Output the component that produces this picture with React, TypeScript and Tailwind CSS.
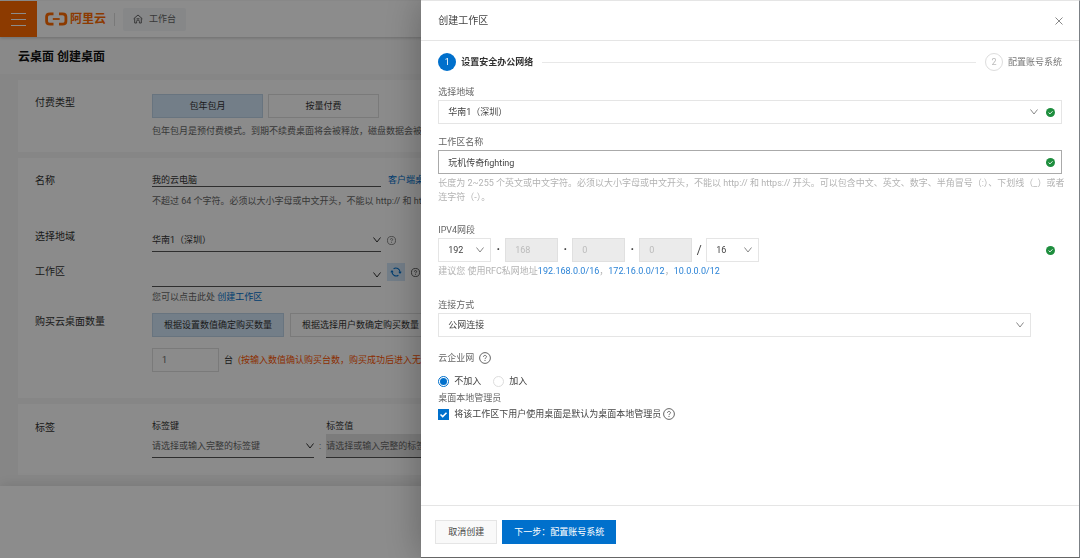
import { useState } from "react";
import type { ReactNode } from "react";

function Chevron({ className }: { className?: string }) {
  return (
    <svg viewBox="0 0 8 6" className={`pointer-events-none h-[6px] w-[8px] ${className ?? ""}`} fill="none" stroke="currentColor">
      <path d="M0.5 0.5 4 5 7.5 0.5" />
    </svg>
  );
}

function CheckBadge() {
  return (
    <svg viewBox="0 0 9 9" className="size-[9px] shrink-0">
      <circle cx="4.5" cy="4.5" r="4.5" fill="#1e8e3e" />
      <path d="M2.6 4.6 4 5.9 6.5 3.3" fill="none" stroke="#fff" strokeWidth="0.9" />
    </svg>
  );
}

function Help({ className }: { className: string }) {
  return (
    <svg viewBox="0 0 12 12" className={`shrink-0 ${className}`} fill="none" stroke="currentColor">
      <circle cx="6" cy="6" r="5.4" />
      <path d="M4.5 4.9C4.5 3.9 5.1 3.4 6 3.4S7.5 4 7.5 4.8C7.5 5.8 6 5.9 6 7.1M6 8v1" />
    </svg>
  );
}

function Row({ label, children, className }: { label: string; children: ReactNode; className?: string }) {
  return (
    <div className={`flex ${className ?? ""}`}>
      <div className="w-[117px] shrink-0 pt-[2px] text-[10px] text-[#333]">{label}</div>
      <div className="min-w-0 flex-1">{children}</div>
    </div>
  );
}

function Toggle({ children, active, className }: { children: ReactNode; active?: boolean; className?: string }) {
  const color = active ? "border-[#bdd4e8] bg-[#d1e5f7]" : "border-[#dedede]";
  return (
    <button type="button" className={`h-[24px] shrink-0 border text-center text-[#333] ${color} ${className ?? ""}`}>
      {children}
    </button>
  );
}

function UnderlineSelect({ label, value, className }: { label: string; value: string; className: string }) {
  return (
    <div className={`relative h-[24px] shrink-0 border-b border-[#555] ${className}`}>
      <select aria-label={label} className="h-full w-full appearance-none bg-transparent">
        <option>{value}</option>
      </select>
      <Chevron className="absolute right-0 bottom-[8px] text-[#333]" />
    </div>
  );
}

function BoxSelect({ id, label, value, className, valid }: { id?: string; label?: string; value: string; className?: string; valid?: boolean }) {
  return (
    <div className={`relative h-[24px] border border-[#e5e5e5] ${className ?? ""}`}>
      <select id={id} aria-label={label} className="h-full w-full appearance-none bg-transparent pl-[9px]">
        <option>{value}</option>
      </select>
      <div className="pointer-events-none absolute inset-y-0 right-[6px] flex items-center gap-[8px] text-[#888]">
        <Chevron />
        {valid && <CheckBadge />}
      </div>
    </div>
  );
}

function OrderPage() {
  return (
    <div className="flex min-h-screen flex-col border-t border-[#fff] bg-[#f5f5f5] whitespace-nowrap text-[#666]">
      <header className="relative flex h-[36px] items-center bg-white shadow-[0_1px_3px_rgba(0,0,0,0.2)]">
        <button type="button" aria-label="菜单" className="flex h-full w-[37px] flex-col items-center justify-center gap-[5px] bg-[#ff6a00]">
          <span className="h-px w-[15px] bg-white" />
          <span className="h-px w-[15px] bg-white" />
          <span className="h-px w-[15px] bg-white" />
        </button>
        <div className="ml-[8px] flex items-center gap-[2px] text-[#ff6a00]">
          <svg viewBox="0 0 23 14" className="h-[14px] w-[23px]" fill="none" stroke="currentColor">
            <path d="M8.5 1.8H5C2.6 1.8 1.6 2.8 1.6 4.8V9.2C1.6 11.2 2.6 12.2 5 12.2H8.5M14 1.8H17.500C19.900 1.800 20.900 2.800 20.900 4.800V9.200C20.900 11.200 19.900 12.200 17.500 12.200H14" strokeWidth="2.8" />
            <path d="M7.800 7H14.700" strokeWidth="1.800" />
          </svg>
          <span className="text-[12px] font-bold">阿里云</span>
        </div>
        <div className="ml-[8px] h-[13px] w-px bg-[#ddd]" />
        <a href="#" className="ml-[8px] flex h-[23px] items-center gap-[6px] rounded-[2px] bg-[#f4f6f8] px-[10px]">
          <svg viewBox="0 0 10 10" className="size-[10px]" fill="none" stroke="currentColor">
            <path d="M0.600 4.800 5 1 9.400 4.800M1.700 4.200V9H3.600V7.400A1.400 1.400 0 0 1 6.400 7.400V9H8.300V4.200M3.500 4.800H6.500" />
          </svg>
          工作台
        </a>
      </header>
      <h1 className="bg-[#f9f9f9] pt-[13px] pb-[9px] pl-[18px] text-[12px] leading-[15px] font-bold text-[#111]">云桌面 创建桌面</h1>

      <main className="flex flex-col gap-[6px] pt-[6px] pb-[11px] pl-[18px]">
        <section className="bg-[#fdfdfd] pt-[14px] pb-[14px] pl-[17px]">
          <Row label="付费类型">
            <div className="flex gap-[5px]">
              <Toggle active className="w-[111px]">包年包月</Toggle>
              <Toggle className="w-[111px]">按量付费</Toggle>
            </div>
            <p className="mt-[6px]">包年包月是预付费模式。到期不续费桌面将会被释放，磁盘数据会被清空</p>
          </Row>
        </section>

        <section className="bg-[#fdfdfd] pt-[14px] pb-[26px] pl-[17px]">
          <Row label="名称">
            <div className="flex items-center gap-[7px]">
              <input aria-label="名称" defaultValue="我的云电脑" className="h-[15px] w-[229px] border-b border-[#555] text-[#333]" />
              <a href="#" className="text-[#0070cc]">客户端桌</a>
            </div>
            <p className="mt-[7px]">不超过 64 个字符。必须以大小字母或中文开头，不能以 http:// 和 https:</p>
          </Row>
          <Row label="选择地域" className="mt-[20px]">
            <div className="flex items-center gap-[6px] text-[#333]">
              <UnderlineSelect label="选择地域" value="华南1（深圳）" className="w-[229px]" />
              <Help className="size-[9px] text-[#666]" />
            </div>
          </Row>
          <Row label="工作区" className="mt-[11px]">
            <div className="flex items-start gap-[6px] text-[#333]">
              <UnderlineSelect label="工作区" value="" className="w-[229px]" />
              <button type="button" aria-label="刷新" className="flex size-[18px] items-center justify-center bg-[#d1e5f7] text-[#0070cc]">
                <svg viewBox="0 0 12 12" className="size-[12px]" fill="none" stroke="currentColor" strokeWidth="1.100">
                  <path d="M3.600 2.800A4 4 0 0 1 10 6M8.400 9.200A4 4 0 0 1 2 6" />
                  <path d="M8.300 5.800H11.700L10 8ZM0.300 6.200H3.700L2 4Z" fill="currentColor" stroke="none" />
                </svg>
              </button>
              <Help className="mt-[5px] size-[9px]" />
            </div>
            <p className="mt-[3px]">
              您可以点击此处 <a href="#" className="text-[#0070cc]">创建工作区</a>
            </p>
          </Row>
          <Row label="购买云桌面数量" className="mt-[9px]">
            <div className="flex gap-[6px]">
              <Toggle active className="px-[11px]">根据设置数值确定购买数量</Toggle>
              <Toggle className="px-[11px]">根据选择用户数确定购买数量</Toggle>
            </div>
            <div className="mt-[11px] flex items-center gap-[5px]">
              <input aria-label="购买数量" defaultValue="1" className="h-[24px] w-[67px] border border-[#dedede] px-[9px]" />
              <span className="text-[#333]">台</span>
              <span className="text-[#ff5500]">(按输入数值确认购买台数，购买成功后进入无影</span>
            </div>
          </Row>
        </section>

        <section className="bg-[#fdfdfd] pt-[15px] pb-[17px] pl-[17px]">
          <Row label="标签">
            <div className="flex items-end gap-[5px]">
              <div>
                <div className="mb-px text-[#333]">标签键</div>
                <UnderlineSelect label="标签键" value="请选择或输入完整的标签键" className="w-[162px]" />
              </div>
              <span className="pb-[5px]">:</span>
              <div>
                <div className="mb-px text-[#333]">标签值</div>
                <UnderlineSelect label="标签值" value="请选择或输入完整的标签值" className="w-[162px] bg-[#e2e2e2]" />
              </div>
            </div>
          </Row>
        </section>
      </main>
      <footer className="relative min-h-[71px] flex-1 bg-white shadow-[0_-2px_12px_rgba(0,0,0,0.1)]" />
    </div>
  );
}

export default function App() {
  const [name, setName] = useState("玩机传奇fighting");
  const [join, setJoin] = useState(false);
  const [admin, setAdmin] = useState(true);

  const radio =
    "size-[11px] appearance-none rounded-full border border-[#ddd] bg-clip-content p-px checked:border-[#0070cc] checked:bg-[#0070cc]";
  const octet = "h-[24px] w-[53px] border border-[#e0e0e0] bg-[#ebebeb] pl-[9px] text-[#bbb]";

  return (
    <div className="overflow-hidden font-['Roboto','Noto_Sans_CJK_SC',sans-serif] text-[9px] leading-[14px]">
      <OrderPage />
      <div className="fixed inset-0 bg-black/45" />

      <div
        role="dialog"
        aria-label="创建工作区"
        className="fixed inset-y-0 right-0 flex w-[61%] flex-col border-t border-r border-b border-t-[#e5e5e5] border-r-[#7b8085] border-b-[#666] bg-white text-[#444] shadow-[0_0_36px_rgba(0,0,0,0.3)]"
      >
        <header className="flex h-[40px] items-center justify-between border-b border-[#e5e5e5] px-[17px]">
          <h2 className="text-[10px]">创建工作区</h2>
          <button type="button" aria-label="关闭" className="-mr-px text-[#888]">
            <svg viewBox="0 0 8 8" className="size-[8px]" fill="none" stroke="currentColor">
              <path d="M0.500 0.500 7.500 7.500M7.500 0.500 0.500 7.500" />
            </svg>
          </button>
        </header>

        <form className="flex-1 overflow-auto px-[17px] pt-[12px]">
          <ol className="flex items-center gap-[9px]">
            <li className="flex items-center gap-[5px] font-bold text-[#333]">
              <span className="flex size-[18px] items-center justify-center rounded-full bg-[#0070cc] font-normal text-white">1</span>
              设置安全办公网络
            </li>
            <li aria-hidden="true" className="h-px flex-1 bg-[#e8e8e8]" />
            <li className="flex items-center gap-[5px] text-[#777]">
              <span className="flex size-[18px] items-center justify-center rounded-full border border-[#ddd] text-[#bbb]">2</span>
              配置账号系统
            </li>
          </ol>

          <label htmlFor="region" className="mt-[14px] mb-px block text-[#666]">选择地域</label>
          <BoxSelect id="region" value="华南1（深圳）" valid />

          <label htmlFor="name" className="mt-[11px] mb-px block text-[#666]">工作区名称</label>
          <div className="flex h-[24px] items-center border border-[#aaa] pr-[6px]">
            <input id="name" value={name} onChange={(e) => setName(e.target.value)} className="h-full flex-1 pl-[9px] outline-none" />
            <CheckBadge />
          </div>
          <p className="-mr-[6px] mt-[2px] text-[#b3b3b3]">
            长度为 2~255 个英文或中文字符。必须以大小字母或中文开头，不能以 http:// 和 https:// 开头。可以包含中文、英文、数字、半角冒号（:）、下划线（_）或者连字符（-）。
          </p>

          <div className="mt-[19px] mb-px text-[#666]">IPV4网段</div>
          <div className="flex items-center justify-between pr-[7px]">
            <div className="flex items-center">
              <BoxSelect label="网段第一段" value="192" className="w-[53px]" />
              <span className="w-[14px] text-center text-[12px] font-bold">·</span>
              <input aria-label="网段第二段" disabled value="168" className={octet} />
              <span className="w-[14px] text-center text-[12px] font-bold">·</span>
              <input aria-label="网段第三段" disabled value="0" className={octet} />
              <span className="w-[14px] text-center text-[12px] font-bold">·</span>
              <input aria-label="网段第四段" disabled value="0" className={octet} />
              <span className="w-[14px] text-center text-[12px]">/</span>
              <BoxSelect label="掩码" value="16" className="w-[53px]" />
            </div>
            <CheckBadge />
          </div>
          <p className="mt-[2px] text-[#b3b3b3]">
            建议您 使用RFC私网地址<a href="#" className="text-[#2b83d6]">192.168.0.0/16</a>，
            <a href="#" className="text-[#2b83d6]">172.16.0.0/12</a>，
            <a href="#" className="text-[#2b83d6]">10.0.0.0/12</a>
          </p>

          <label htmlFor="conn" className="mt-[20px] mb-px block text-[#666]">连接方式</label>
          <BoxSelect id="conn" value="公网连接" className="w-[95%]" />

          <div className="mt-[14px] flex h-[14px] items-center gap-[5px] text-[#666]">
            云企业网
            <Help className="size-[12px]" />
          </div>
          <div className="mt-[9px] flex gap-[12px]">
            <label className="flex items-center gap-[5px]">
              <input type="radio" name="cen" checked={!join} onChange={() => setJoin(false)} className={radio} />
              不加入
            </label>
            <label className="flex items-center gap-[5px]">
              <input type="radio" name="cen" checked={join} onChange={() => setJoin(true)} className={radio} />
              加入
            </label>
          </div>
          <div className="mt-[3px] text-[#666]">桌面本地管理员</div>
          <div className="mt-[2px] flex items-center gap-[2px]">
            <label className="flex items-center gap-[5px]">
              <span className="relative flex">
                <input
                  type="checkbox"
                  checked={admin}
                  onChange={(e) => setAdmin(e.target.checked)}
                  className="size-[11px] appearance-none border border-[#ccc] checked:border-[#0070cc] checked:bg-[#0070cc]"
                />
                {admin && (
                  <svg viewBox="0 0 11 11" className="pointer-events-none absolute inset-0" fill="none" stroke="#fff" strokeWidth="1.500">
                    <path d="M2.500 5.500 4.700 7.600 8.500 3.700" />
                  </svg>
                )}
              </span>
              将该工作区下用户使用桌面是默认为桌面本地管理员
            </label>
            <Help className="size-[12px] text-[#666]" />
          </div>
        </form>

        <footer className="flex gap-[5px] border-t border-[#e5e5e5] px-[14px] pt-[14px] pb-[13px]">
          <button type="button" className="h-[24px] border border-[#e5e5e5] bg-[#f9f9f9] px-[12px]">取消创建</button>
          <button type="button" className="h-[24px] bg-[#0070cc] px-[12px] text-white">下一步：配置账号系统</button>
        </footer>
      </div>
    </div>
  );
}
